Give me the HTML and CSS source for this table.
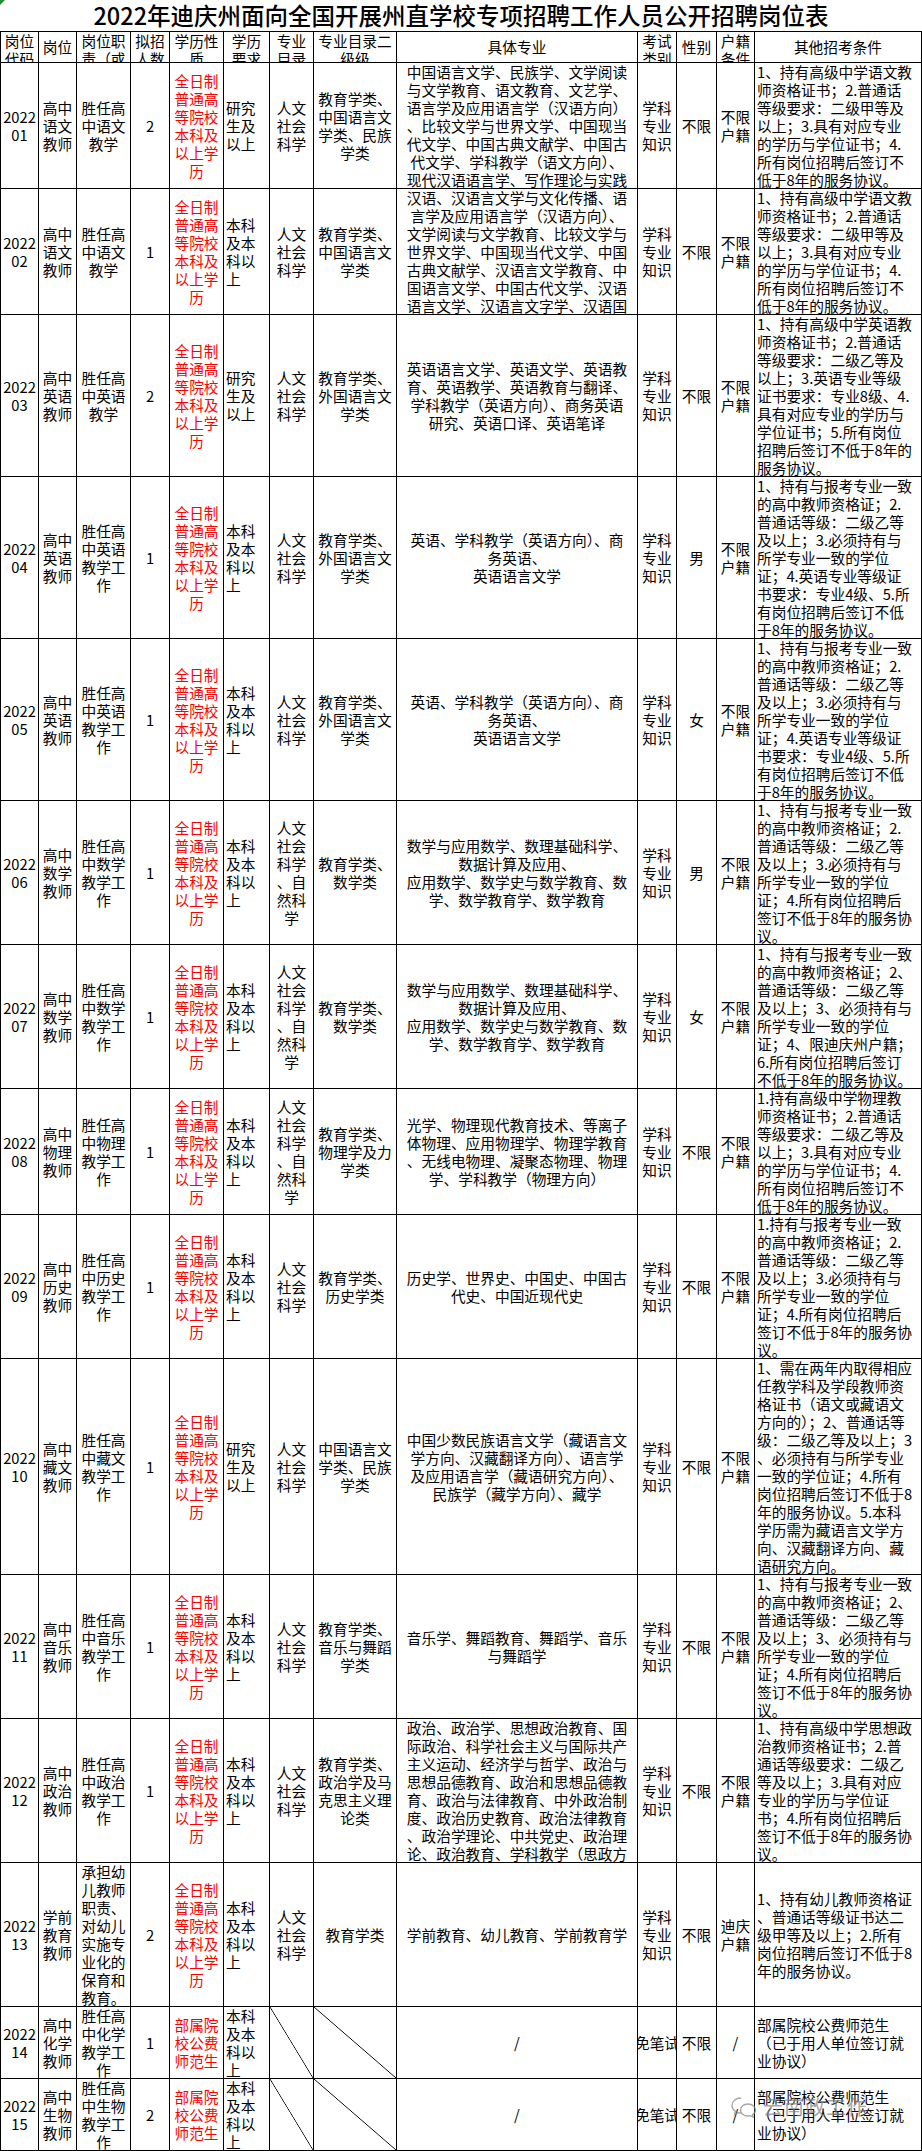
FILE: index.html
```html
<!DOCTYPE html>
<html lang="zh-CN">
<head>
<meta charset="utf-8">
<title>2022年迪庆州面向全国开展州直学校专项招聘工作人员公开招聘岗位表</title>
<link rel="stylesheet" href="styles.css">
</head>
<body>
<div class="sheet">
  <span class="flag"></span>
  <div class="title">2022年迪庆州面向全国开展州直学校专项招聘工作人员公开招聘岗位表</div>

  <div class="row hdr">
    <div class="top">岗位<br>代码</div>
    <div>岗位</div>
    <div class="top">岗位职<br>责（或</div>
    <div class="top">拟招<br>人数</div>
    <div class="top">学历性<br>质</div>
    <div class="top">学历<br>要求</div>
    <div class="top">专业<br>目录</div>
    <div class="top">专业目录二<br>级级</div>
    <div>具体专业</div>
    <div class="top">考试<br>类别</div>
    <div>性别</div>
    <div class="top">户籍<br>条件</div>
    <div>其他招考条件</div>
  </div>

  <div class="row l7">
    <div>2022<br>01</div>
    <div>高中<br>语文<br>教师</div>
    <div>胜任高<br>中语文<br>教学</div>
    <div>2</div>
    <div class="red">全日制<br>普通高<br>等院校<br>本科及<br>以上学<br>历</div>
    <div class="left">研究<br>生及<br>以上</div>
    <div>人文<br>社会<br>科学</div>
    <div>教育学类、<br>中国语言文<br>学类、民族<br>学类</div>
    <div class="top">中国语言文学、民族学、文学阅读<br>与文学教育、语文教育、文艺学、<br>语言学及应用语言学（汉语方向）<br>、比较文学与世界文学、中国现当<br>代文学、中国古典文献学、中国古<br>代文学、学科教学（语文方向）、<br>现代汉语语言学、写作理论与实践</div>
    <div>学科<br>专业<br>知识</div>
    <div>不限</div>
    <div>不限<br>户籍</div>
    <div class="left">1、持有高级中学语文教<br>师资格证书；2.普通话<br>等级要求：二级甲等及<br>以上；3.具有对应专业<br>的学历与学位证书；4.<br>所有岗位招聘后签订不<br>低于8年的服务协议。</div>
  </div>

  <div class="row l7">
    <div>2022<br>02</div>
    <div>高中<br>语文<br>教师</div>
    <div>胜任高<br>中语文<br>教学</div>
    <div>1</div>
    <div class="red">全日制<br>普通高<br>等院校<br>本科及<br>以上学<br>历</div>
    <div class="left">本科<br>及本<br>科以<br>上</div>
    <div>人文<br>社会<br>科学</div>
    <div>教育学类、<br>中国语言文<br>学类</div>
    <div class="top">汉语、汉语言文学与文化传播、语<br>言学及应用语言学（汉语方向）、<br>文学阅读与文学教育、比较文学与<br>世界文学、中国现当代文学、中国<br>古典文献学、汉语言文学教育、中<br>国语言文学、中国古代文学、汉语<br>语言文学、汉语言文字学、汉语国</div>
    <div>学科<br>专业<br>知识</div>
    <div>不限</div>
    <div>不限<br>户籍</div>
    <div class="left">1、持有高级中学语文教<br>师资格证书；2.普通话<br>等级要求：二级甲等及<br>以上；3.具有对应专业<br>的学历与学位证书；4.<br>所有岗位招聘后签订不<br>低于8年的服务协议。</div>
  </div>

  <div class="row l9">
    <div>2022<br>03</div>
    <div>高中<br>英语<br>教师</div>
    <div>胜任高<br>中英语<br>教学</div>
    <div>2</div>
    <div class="red">全日制<br>普通高<br>等院校<br>本科及<br>以上学<br>历</div>
    <div class="left">研究<br>生及<br>以上</div>
    <div>人文<br>社会<br>科学</div>
    <div>教育学类、<br>外国语言文<br>学类</div>
    <div>英语语言文学、英语文学、英语教<br>育、英语教学、英语教育与翻译、<br>学科教学（英语方向）、商务英语<br>研究、英语口译、英语笔译</div>
    <div>学科<br>专业<br>知识</div>
    <div>不限</div>
    <div>不限<br>户籍</div>
    <div class="left">1、持有高级中学英语教<br>师资格证书；2.普通话<br>等级要求：二级乙等及<br>以上；3.英语专业等级<br>证书要求：专业8级、4.<br>具有对应专业的学历与<br>学位证书；5.所有岗位<br>招聘后签订不低于8年的<br>服务协议。</div>
  </div>

  <div class="row l9">
    <div>2022<br>04</div>
    <div>高中<br>英语<br>教师</div>
    <div>胜任高<br>中英语<br>教学工<br>作</div>
    <div>1</div>
    <div class="red">全日制<br>普通高<br>等院校<br>本科及<br>以上学<br>历</div>
    <div class="left">本科<br>及本<br>科以<br>上</div>
    <div>人文<br>社会<br>科学</div>
    <div>教育学类、<br>外国语言文<br>学类</div>
    <div>英语、学科教学（英语方向）、商<br>务英语、<br>英语语言文学</div>
    <div>学科<br>专业<br>知识</div>
    <div>男</div>
    <div>不限<br>户籍</div>
    <div class="left">1、持有与报考专业一致<br>的高中教师资格证；2.<br>普通话等级：二级乙等<br>及以上；3.必须持有与<br>所学专业一致的学位<br>证；4.英语专业等级证<br>书要求：专业4级、5.所<br>有岗位招聘后签订不低<br>于8年的服务协议。</div>
  </div>

  <div class="row l9">
    <div>2022<br>05</div>
    <div>高中<br>英语<br>教师</div>
    <div>胜任高<br>中英语<br>教学工<br>作</div>
    <div>1</div>
    <div class="red">全日制<br>普通高<br>等院校<br>本科及<br>以上学<br>历</div>
    <div class="left">本科<br>及本<br>科以<br>上</div>
    <div>人文<br>社会<br>科学</div>
    <div>教育学类、<br>外国语言文<br>学类</div>
    <div>英语、学科教学（英语方向）、商<br>务英语、<br>英语语言文学</div>
    <div>学科<br>专业<br>知识</div>
    <div>女</div>
    <div>不限<br>户籍</div>
    <div class="left">1、持有与报考专业一致<br>的高中教师资格证；2.<br>普通话等级：二级乙等<br>及以上；3.必须持有与<br>所学专业一致的学位<br>证；4.英语专业等级证<br>书要求：专业4级、5.所<br>有岗位招聘后签订不低<br>于8年的服务协议。</div>
  </div>

  <div class="row l8">
    <div>2022<br>06</div>
    <div>高中<br>数学<br>教师</div>
    <div>胜任高<br>中数学<br>教学工<br>作</div>
    <div>1</div>
    <div class="red">全日制<br>普通高<br>等院校<br>本科及<br>以上学<br>历</div>
    <div class="left">本科<br>及本<br>科以<br>上</div>
    <div>人文<br>社会<br>科学<br>、自<br>然科<br>学</div>
    <div>教育学类、<br>数学类</div>
    <div>数学与应用数学、数理基础科学、<br>数据计算及应用、<br>应用数学、数学史与数学教育、数<br>学、数学教育学、数学教育</div>
    <div>学科<br>专业<br>知识</div>
    <div>男</div>
    <div>不限<br>户籍</div>
    <div class="left">1、持有与报考专业一致<br>的高中教师资格证；2.<br>普通话等级：二级乙等<br>及以上；3.必须持有与<br>所学专业一致的学位<br>证；4.所有岗位招聘后<br>签订不低于8年的服务协<br>议。</div>
  </div>

  <div class="row l8">
    <div>2022<br>07</div>
    <div>高中<br>数学<br>教师</div>
    <div>胜任高<br>中数学<br>教学工<br>作</div>
    <div>1</div>
    <div class="red">全日制<br>普通高<br>等院校<br>本科及<br>以上学<br>历</div>
    <div class="left">本科<br>及本<br>科以<br>上</div>
    <div>人文<br>社会<br>科学<br>、自<br>然科<br>学</div>
    <div>教育学类、<br>数学类</div>
    <div>数学与应用数学、数理基础科学、<br>数据计算及应用、<br>应用数学、数学史与数学教育、数<br>学、数学教育学、数学教育</div>
    <div>学科<br>专业<br>知识</div>
    <div>女</div>
    <div>不限<br>户籍</div>
    <div class="left">1、持有与报考专业一致<br>的高中教师资格证；2、<br>普通话等级：二级乙等<br>及以上；3、必须持有与<br>所学专业一致的学位<br>证；4、限迪庆州户籍；<br>6.所有岗位招聘后签订<br>不低于8年的服务协议。</div>
  </div>

  <div class="row l7">
    <div>2022<br>08</div>
    <div>高中<br>物理<br>教师</div>
    <div>胜任高<br>中物理<br>教学工<br>作</div>
    <div>1</div>
    <div class="red">全日制<br>普通高<br>等院校<br>本科及<br>以上学<br>历</div>
    <div class="left">本科<br>及本<br>科以<br>上</div>
    <div>人文<br>社会<br>科学<br>、自<br>然科<br>学</div>
    <div>教育学类、<br>物理学及力<br>学类</div>
    <div>光学、物理现代教育技术、等离子<br>体物理、应用物理学、物理学教育<br>、无线电物理、凝聚态物理、物理<br>学、学科教学（物理方向）</div>
    <div>学科<br>专业<br>知识</div>
    <div>不限</div>
    <div>不限<br>户籍</div>
    <div class="left">1.持有高级中学物理教<br>师资格证书；2.普通话<br>等级要求：二级乙等及<br>以上；3.具有对应专业<br>的学历与学位证书；4.<br>所有岗位招聘后签订不<br>低于8年的服务协议。</div>
  </div>

  <div class="row l8">
    <div>2022<br>09</div>
    <div>高中<br>历史<br>教师</div>
    <div>胜任高<br>中历史<br>教学工<br>作</div>
    <div>1</div>
    <div class="red">全日制<br>普通高<br>等院校<br>本科及<br>以上学<br>历</div>
    <div class="left">本科<br>及本<br>科以<br>上</div>
    <div>人文<br>社会<br>科学</div>
    <div>教育学类、<br>历史学类</div>
    <div>历史学、世界史、中国史、中国古<br>代史、中国近现代史</div>
    <div>学科<br>专业<br>知识</div>
    <div>不限</div>
    <div>不限<br>户籍</div>
    <div class="left">1.持有与报考专业一致<br>的高中教师资格证；2.<br>普通话等级：二级乙等<br>及以上；3.必须持有与<br>所学专业一致的学位<br>证；4.所有岗位招聘后<br>签订不低于8年的服务协<br>议。</div>
  </div>

  <div class="row l12">
    <div>2022<br>10</div>
    <div>高中<br>藏文<br>教师</div>
    <div>胜任高<br>中藏文<br>教学工<br>作</div>
    <div>1</div>
    <div class="red">全日制<br>普通高<br>等院校<br>本科及<br>以上学<br>历</div>
    <div class="left">研究<br>生及<br>以上</div>
    <div>人文<br>社会<br>科学</div>
    <div>中国语言文<br>学类、民族<br>学类</div>
    <div>中国少数民族语言文学（藏语言文<br>学方向、汉藏翻译方向）、语言学<br>及应用语言学（藏语研究方向）、<br>民族学（藏学方向）、藏学</div>
    <div>学科<br>专业<br>知识</div>
    <div>不限</div>
    <div>不限<br>户籍</div>
    <div class="left">1、需在两年内取得相应<br>任教学科及学段教师资<br>格证书（语文或藏语文<br>方向的）；2、普通话等<br>级：二级乙等及以上；3<br>、必须持有与所学专业<br>一致的学位证；4.所有<br>岗位招聘后签订不低于8<br>年的服务协议。5.本科<br>学历需为藏语言文学方<br>向、汉藏翻译方向、藏<br>语研究方向。</div>
  </div>

  <div class="row l8">
    <div>2022<br>11</div>
    <div>高中<br>音乐<br>教师</div>
    <div>胜任高<br>中音乐<br>教学工<br>作</div>
    <div>1</div>
    <div class="red">全日制<br>普通高<br>等院校<br>本科及<br>以上学<br>历</div>
    <div class="left">本科<br>及本<br>科以<br>上</div>
    <div>人文<br>社会<br>科学</div>
    <div>教育学类、<br>音乐与舞蹈<br>学类</div>
    <div>音乐学、舞蹈教育、舞蹈学、音乐<br>与舞蹈学</div>
    <div>学科<br>专业<br>知识</div>
    <div>不限</div>
    <div>不限<br>户籍</div>
    <div class="left">1、持有与报考专业一致<br>的高中教师资格证；2、<br>普通话等级：二级乙等<br>及以上；3、必须持有与<br>所学专业一致的学位<br>证；4.所有岗位招聘后<br>签订不低于8年的服务协<br>议。</div>
  </div>

  <div class="row l8">
    <div>2022<br>12</div>
    <div>高中<br>政治<br>教师</div>
    <div>胜任高<br>中政治<br>教学工<br>作</div>
    <div>1</div>
    <div class="red">全日制<br>普通高<br>等院校<br>本科及<br>以上学<br>历</div>
    <div class="left">本科<br>及本<br>科以<br>上</div>
    <div>人文<br>社会<br>科学</div>
    <div>教育学类、<br>政治学及马<br>克思主义理<br>论类</div>
    <div class="top">政治、政治学、思想政治教育、国<br>际政治、科学社会主义与国际共产<br>主义运动、经济学与哲学、政治与<br>思想品德教育、政治和思想品德教<br>育、政治与法律教育、中外政治制<br>度、政治历史教育、政治法律教育<br>、政治学理论、中共党史、政治理<br>论、政治教育、学科教学（思政方</div>
    <div>学科<br>专业<br>知识</div>
    <div>不限</div>
    <div>不限<br>户籍</div>
    <div class="left">1、持有高级中学思想政<br>治教师资格证书；2.普<br>通话等级要求：二级乙<br>等及以上；3.具有对应<br>专业的学历与学位证<br>书；4.所有岗位招聘后<br>签订不低于8年的服务协<br>议。</div>
  </div>

  <div class="row l8">
    <div>2022<br>13</div>
    <div>学前<br>教育<br>教师</div>
    <div>承担幼<br>儿教师<br>职责、<br>对幼儿<br>实施专<br>业化的<br>保育和<br>教育。</div>
    <div>2</div>
    <div class="red">全日制<br>普通高<br>等院校<br>本科及<br>以上学<br>历</div>
    <div class="left">本科<br>及本<br>科以<br>上</div>
    <div>人文<br>社会<br>科学</div>
    <div>教育学类</div>
    <div>学前教育、幼儿教育、学前教育学</div>
    <div>学科<br>专业<br>知识</div>
    <div>不限</div>
    <div>迪庆<br>户籍</div>
    <div class="left">1、持有幼儿教师资格证<br>、普通话等级证书达二<br>级甲等及以上；2.所有<br>岗位招聘后签订不低于8<br>年的服务协议。</div>
  </div>

  <div class="row l4">
    <div>2022<br>14</div>
    <div>高中<br>化学<br>教师</div>
    <div>胜任高<br>中化学<br>教学工<br>作</div>
    <div>1</div>
    <div class="red">部属院<br>校公费<br>师范生</div>
    <div class="left">本科<br>及本<br>科以<br>上</div>
    <div class="diag"></div>
    <div class="diag"></div>
    <div>/</div>
    <div>免笔试</div>
    <div>不限</div>
    <div>/</div>
    <div class="left">部属院校公费师范生<br>（已于用人单位签订就<br>业协议）</div>
  </div>

  <div class="row l4 last">
    <div>2022<br>15</div>
    <div>高中<br>生物<br>教师</div>
    <div>胜任高<br>中生物<br>教学工<br>作</div>
    <div>2</div>
    <div class="red">部属院<br>校公费<br>师范生</div>
    <div class="left">本科<br>及本<br>科以<br>上</div>
    <div class="diag"></div>
    <div class="diag"></div>
    <div>/</div>
    <div>免笔试</div>
    <div>不限</div>
    <div>/</div>
    <div class="left">部属院校公费师范生<br>（已于用人单位签订就<br>业协议）</div>
  </div>

  <div class="watermark">
    <svg class="wm-icon" viewBox="0 0 26 22" width="26" height="22">
      <path d="M10 2 C4.5 2 1 5.5 1 9.5 C1 12 2.3 14 4.5 15.3 L3.6 18.5 L7.2 16.6 C8.1 16.9 9 17 10 17" fill="none" stroke="#8a8a8a" stroke-width="1.4"/>
      <path d="M17 8 C12.6 8 9.5 10.8 9.5 14 C9.5 17.2 12.6 20 17 20 C17.8 20 18.6 19.9 19.3 19.7 L22.3 21.2 L21.6 18.6 C23.6 17.4 24.5 15.8 24.5 14 C24.5 10.8 21.4 8 17 8 Z" fill="none" stroke="#8a8a8a" stroke-width="1.4"/>
    </svg>
    <span class="wm-text">云南政工作</span>
  </div>
</div>
</body>
</html>
```

FILE: styles.css
```css
* {
  box-sizing: border-box;
}

body {
  margin: 0;
  background: #fff;
  color: #000;
  font-family: "Noto Sans CJK SC", "Liberation Sans", sans-serif;
  font-size: 14.7px;
}

.sheet {
  width: 922px;
  position: relative;
}

.flag {
  position: absolute;
  left: 0;
  top: 0;
  width: 0;
  height: 0;
  border-top: 5px solid #1f8f2f;
  border-right: 5px solid transparent;
}

.title {
  height: 31px;
  display: flex;
  align-items: center;
  justify-content: center;
  font-size: 23.5px;
  font-weight: 500;
  line-height: 31px;
}

.row {
  display: grid;
  grid-template-columns: 38px 38px 54px 39px 54px 46px 44px 83px 241px 39px 40px 38px 168px;
}

.row > div {
  border-top: 1px solid #000;
  border-left: 1px solid #000;
  overflow: hidden;
  display: flex;
  flex-direction: column;
  justify-content: center;
  align-items: center;
  text-align: center;
  line-height: 18px;
  white-space: nowrap;
}

.row > div:last-child {
  border-right: 1px solid #000;
}

.row > .top {
  justify-content: flex-start;
}

.row > .left {
  align-items: flex-start;
  text-align: left;
  padding-left: 2px;
}

.row > .red {
  color: #ff0000;
}

.row > .diag {
  background: linear-gradient(to top right, transparent calc(50% - 0.7px), #000 50%, transparent calc(50% + 0.7px));
}

.hdr { height: 31px; }
.l4 { height: 72px; }
.l7 { height: 126px; }
.l8 { height: 144px; }
.l9 { height: 162px; }
.l12 { height: 216px; }

.row.last {
  height: 73px;
}

.row.last > div {
  border-bottom: 1px solid #000;
}

.watermark {
  position: absolute;
  left: 731px;
  top: 2092px;
  display: flex;
  align-items: center;
  gap: 6px;
  opacity: 0.75;
  pointer-events: none;
}

.wm-text {
  font-size: 20px;
  color: #8a8a8a;
  letter-spacing: 1px;
}
```
